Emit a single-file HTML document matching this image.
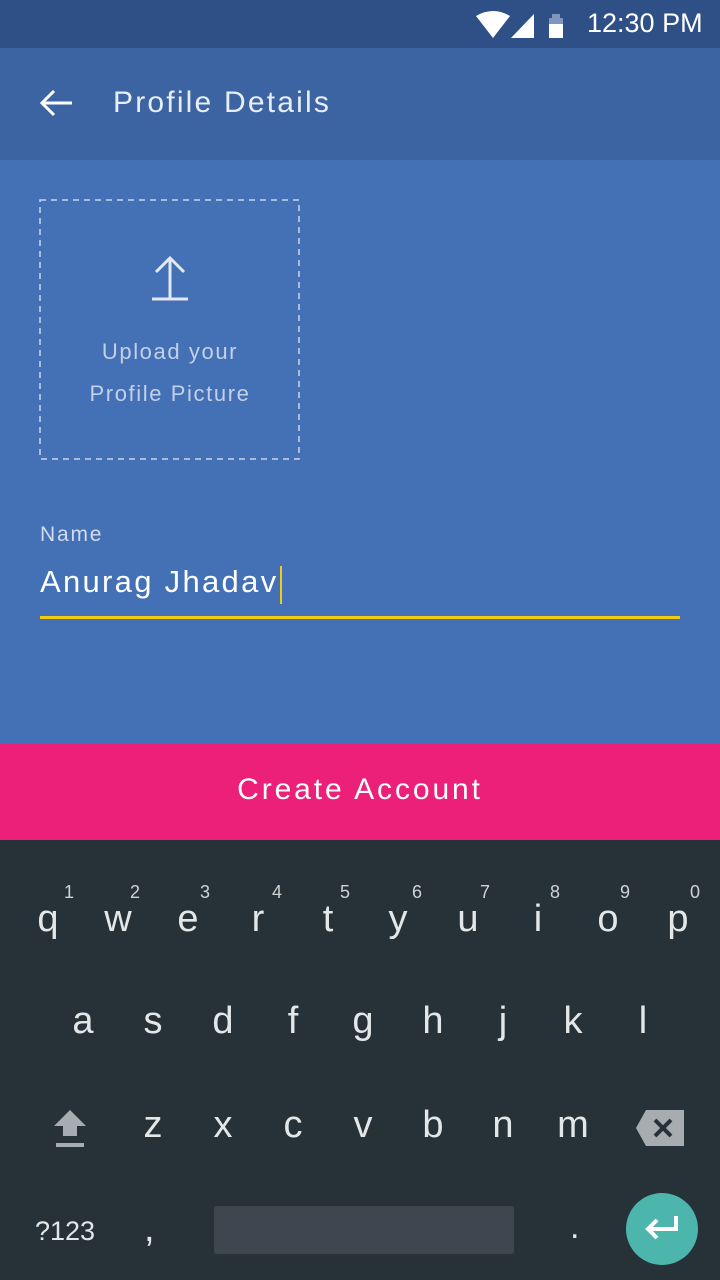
<!DOCTYPE html><html><head><style>
body{margin:0;width:720px;height:1280px;position:relative;overflow:hidden;background:#4470b6;font-family:"Liberation Sans",sans-serif}
.a{position:absolute}
.k{position:absolute;color:#e4e7e8;font-size:38px;width:60px;text-align:center;transform:translateX(-50%)}
.n{position:absolute;color:#cfd3d5;font-size:18px}
</style></head><body>
<div class="a" style="left:0;top:0;width:720px;height:48px;background:#2f5086"></div>
<svg class="a" style="left:474px;top:10px" width="110" height="30"><path d="M2 6 Q19 -4 36 6 L19 28Z" fill="#fff"/><path d="M37 28 L60 4 L60 28Z" fill="#fff"/><rect x="78" y="4" width="8" height="4" fill="#8096be"/><rect x="75" y="8" width="14" height="6" fill="#8096be"/><rect x="75" y="14" width="14" height="14" fill="#fff"/></svg>
<div class="a" style="left:587px;top:8px;color:#fff;font-size:27px">12:30 PM</div>
<div class="a" style="left:0;top:48px;width:720px;height:112px;background:#3c64a3"></div>
<svg class="a" style="left:38px;top:88px" width="36" height="30"><path d="M34 15H4M16 3L4 15L16 27" stroke="#fff" stroke-width="3" fill="none"/></svg>
<div class="a" style="left:113px;top:86px;color:#e8eef8;font-size:30px;letter-spacing:2.2px">Profile Details</div>
<svg class="a" style="left:39px;top:199px" width="262" height="262"><rect x="1" y="1" width="259" height="259" fill="none" stroke="#c9d5ea" stroke-width="1.5" stroke-dasharray="6 5"/></svg>
<svg class="a" style="left:150px;top:254px" width="40" height="48"><path d="M20 44V4M6 18L20 4L34 18M2 45H38" stroke="#e3e9f4" stroke-width="3" fill="none"/></svg>
<div class="a" style="left:40px;top:331px;width:260px;text-align:center;color:#c3d0e8;font-size:22px;line-height:42px;letter-spacing:1.6px">Upload your<br>Profile Picture</div>
<div class="a" style="left:40px;top:523px;color:#d2dcee;font-size:21px;letter-spacing:1.8px">Name</div>
<div class="a" style="left:40px;top:564px;color:#fff;font-size:31px;letter-spacing:2.3px">Anurag Jhadav</div>
<div class="a" style="left:280px;top:566px;width:2px;height:38px;background:#f2c913"></div>
<div class="a" style="left:40px;top:616px;width:640px;height:3px;background:#f2c913"></div>
<div class="a" style="left:0;top:744px;width:720px;height:96px;background:#ec1f79;color:#fff;font-size:30px;text-align:center;line-height:92px;letter-spacing:2.9px">Create Account</div>
<div class="a" style="left:0;top:840px;width:720px;height:440px;background:#263238"></div>
<div class="k" style="left:48px;top:898px">q</div><div class="k" style="left:118px;top:898px">w</div><div class="k" style="left:188px;top:898px">e</div><div class="k" style="left:258px;top:898px">r</div><div class="k" style="left:328px;top:898px">t</div><div class="k" style="left:398px;top:898px">y</div><div class="k" style="left:468px;top:898px">u</div><div class="k" style="left:538px;top:898px">i</div><div class="k" style="left:608px;top:898px">o</div><div class="k" style="left:678px;top:898px">p</div>
<div class="n" style="left:64px;top:882px">1</div><div class="n" style="left:130px;top:882px">2</div><div class="n" style="left:200px;top:882px">3</div><div class="n" style="left:272px;top:882px">4</div><div class="n" style="left:340px;top:882px">5</div><div class="n" style="left:412px;top:882px">6</div><div class="n" style="left:480px;top:882px">7</div><div class="n" style="left:550px;top:882px">8</div><div class="n" style="left:620px;top:882px">9</div><div class="n" style="left:690px;top:882px">0</div>
<div class="k" style="left:83px;top:1000px">a</div><div class="k" style="left:153px;top:1000px">s</div><div class="k" style="left:223px;top:1000px">d</div><div class="k" style="left:293px;top:1000px">f</div><div class="k" style="left:363px;top:1000px">g</div><div class="k" style="left:433px;top:1000px">h</div><div class="k" style="left:503px;top:1000px">j</div><div class="k" style="left:573px;top:1000px">k</div><div class="k" style="left:643px;top:1000px">l</div>
<svg class="a" style="left:50px;top:1108px" width="40" height="42"><path d="M20 2L36 18H27V28H13V18H4Z" fill="#a6acaf"/><rect x="6" y="35" width="28" height="4" fill="#a6acaf"/></svg>
<div class="k" style="left:153px;top:1104px">z</div><div class="k" style="left:223px;top:1104px">x</div><div class="k" style="left:293px;top:1104px">c</div><div class="k" style="left:363px;top:1104px">v</div><div class="k" style="left:433px;top:1104px">b</div><div class="k" style="left:503px;top:1104px">n</div><div class="k" style="left:573px;top:1104px">m</div>
<svg class="a" style="left:634px;top:1108px" width="52" height="40"><path d="M12 2H50V38H12L2 20Z" fill="#a6acaf"/><path d="M21 12L37 28M37 12L21 28" stroke="#263238" stroke-width="4"/></svg>
<div class="a" style="left:35px;top:1216px;color:#e4e7e8;font-size:27px">?123</div>
<div class="a" style="left:144px;top:1208px;color:#e4e7e8;font-size:38px">,</div>
<div class="a" style="left:214px;top:1206px;width:300px;height:48px;background:#3e474f;border-radius:3px"></div>
<div class="a" style="left:570px;top:1208px;color:#e4e7e8;font-size:34px">.</div>
<div class="a" style="left:626px;top:1193px;width:72px;height:72px;border-radius:50%;background:#4db6ac"></div>
<svg class="a" style="left:642px;top:1212px" width="40" height="34"><path d="M34 4V17H6M15 8L6 17L15 26" stroke="#fff" stroke-width="4" fill="none"/></svg>
</body></html>
